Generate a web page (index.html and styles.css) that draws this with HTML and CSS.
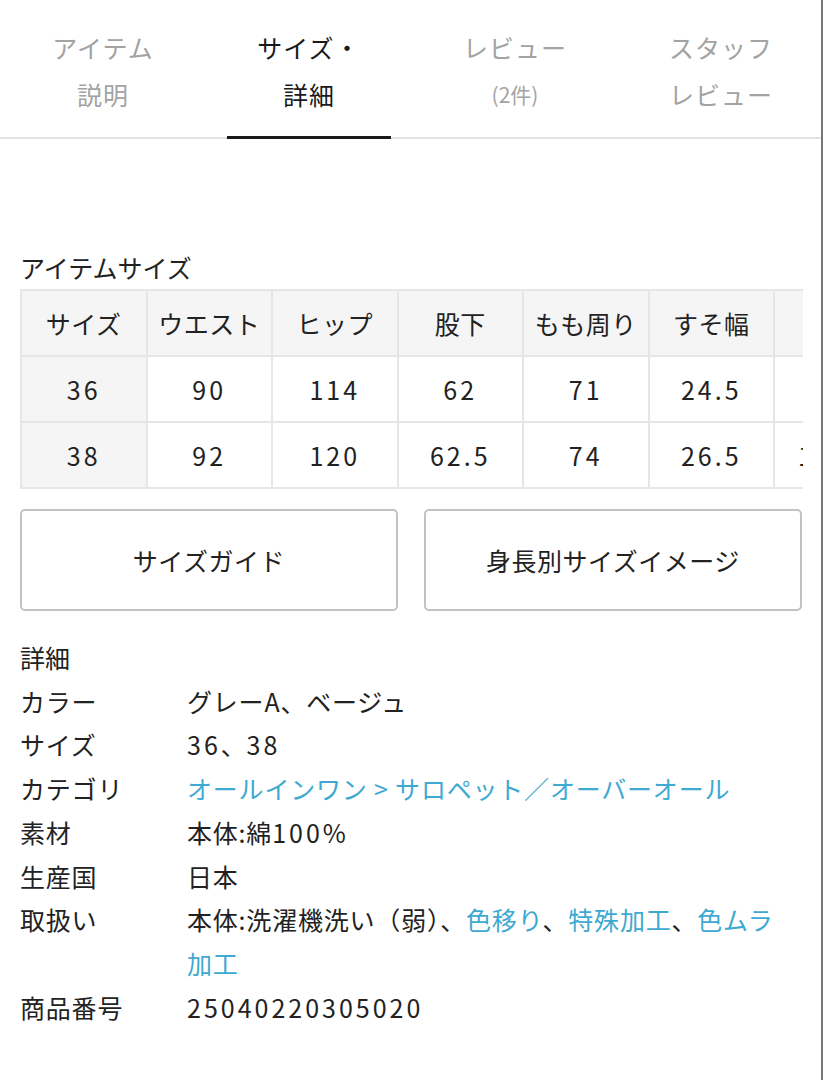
FILE: index.html
```html
<!DOCTYPE html>
<html lang="ja">
<head>
<meta charset="utf-8">
<title>サイズ・詳細</title>
<link rel="stylesheet" href="styles.css">
</head>
<body>
<div class="page">
  <nav class="tabs">
    <div class="tab"><span>アイテム</span><span>説明</span></div>
    <div class="tab active"><span>サイズ・</span><span>詳細</span></div>
    <div class="tab"><span>レビュー</span><span class="small">(2件)</span></div>
    <div class="tab"><span>スタッフ</span><span>レビュー</span></div>
  </nav>

  <section class="sizes">
    <h2 class="heading">アイテムサイズ</h2>
    <div class="table-wrap">
      <table class="size-table">
        <tr class="head">
          <th>サイズ</th><th>ウエスト</th><th>ヒップ</th><th>股下</th><th>もも周り</th><th>すそ幅</th><th>総丈</th>
        </tr>
        <tr>
          <th class="num">36</th><td class="num">90</td><td class="num">114</td><td class="num">62</td><td class="num">71</td><td class="num">24.5</td><td class="num">98</td>
        </tr>
        <tr>
          <th class="num">38</th><td class="num">92</td><td class="num">120</td><td class="num">62.5</td><td class="num">74</td><td class="num">26.5</td><td class="num">102.5</td>
        </tr>
      </table>
    </div>
    <div class="buttons">
      <div class="btn">サイズガイド</div>
      <div class="btn">身長別サイズイメージ</div>
    </div>
  </section>

  <section class="details">
    <h2 class="heading">詳細</h2>
    <dl class="spec">
      <dt>カラー</dt><dd>グレーA、ベージュ</dd>
      <dt>サイズ</dt><dd><span class="num">36</span>、<span class="num">38</span></dd>
      <dt>カテゴリ</dt><dd><span class="link">オールインワン &gt; サロペット／オーバーオール</span></dd>
      <dt>素材</dt><dd>本体:綿<span class="num">100</span>%</dd>
      <dt>生産国</dt><dd>日本</dd>
      <dt>取扱い</dt><dd>本体:洗濯機洗い（弱）、<span class="link">色移り</span>、<span class="link">特殊加工</span>、<span class="link">色ムラ<span class="nowrap">加工</span></span></dd>
      <dt>商品番号</dt><dd class="num">25040220305020</dd>
    </dl>
  </section>
</div>
</body>
</html>
```

FILE: styles.css
```css
* { box-sizing: border-box; }
html, body { margin: 0; padding: 0; background: #fff; }
body {
  font-family: "Noto Sans CJK JP", "Noto Sans", sans-serif;
  color: #222;
  font-size: 25px;
}
.page {
  width: 823px;
  min-height: 1080px;
  border-right: 2px solid #777;
}
.num { letter-spacing: 3px; }
.nowrap { white-space: nowrap; }
.tabs {
  display: grid;
  grid-template-columns: repeat(4, 206px);
  border-bottom: 2px solid #e2e2e2;
}
.tab {
  display: flex;
  flex-direction: column;
  align-items: center;
  padding: 24px 0 19px;
  line-height: 47px;
  color: #a3a3a3;
  font-size: 25px;
  letter-spacing: 1px;
  position: relative;
}
.tab .small { font-size: 21px; letter-spacing: 0; }
.tab.active { color: #1a1a1a; }
.tab.active::after {
  content: "";
  position: absolute;
  left: 21px;
  right: 21px;
  bottom: -2px;
  height: 3px;
  background: #1a1a1a;
}
.heading {
  margin: 0;
  font-size: 25px;
  font-weight: normal;
  line-height: 36px;
  color: #222;
}
.sizes {
  padding: 110px 0 0 20px;
}
.sizes .heading { margin-bottom: 4px; }
.table-wrap {
  width: 783px;
  overflow: hidden;
}
.size-table {
  border-collapse: collapse;
  table-layout: fixed;
  width: 879px;
}
.size-table th, .size-table td {
  width: 125.5px;
  height: 66px;
  border: 2px solid #e6e6e6;
  text-align: center;
  font-weight: normal;
  font-size: 25px;
  padding: 0;
  white-space: nowrap;
  color: #222;
}
.size-table th { background: #f5f5f5; }
.size-table .head th { letter-spacing: 0.5px; }
.buttons {
  display: flex;
  gap: 26px;
  margin-top: 20px;
  padding-right: 19px;
}
.btn {
  flex: 1;
  height: 102px;
  border: 2px solid #c2c2c2;
  border-radius: 5px;
  display: flex;
  align-items: center;
  justify-content: center;
  font-size: 25px;
  letter-spacing: 0.5px;
  color: #222;
}
.details {
  padding: 25px 20px 0 20px;
}
.details .heading { line-height: 43.7px; }
.spec {
  margin: 0;
  display: grid;
  grid-template-columns: 167px 1fr;
  line-height: 43.7px;
  letter-spacing: 0.8px;
}
.spec dt, .spec dd { margin: 0; font-size: 25px; }
.spec dd.num { letter-spacing: 3px; }
.link { color: #3ea9d1; }
```
